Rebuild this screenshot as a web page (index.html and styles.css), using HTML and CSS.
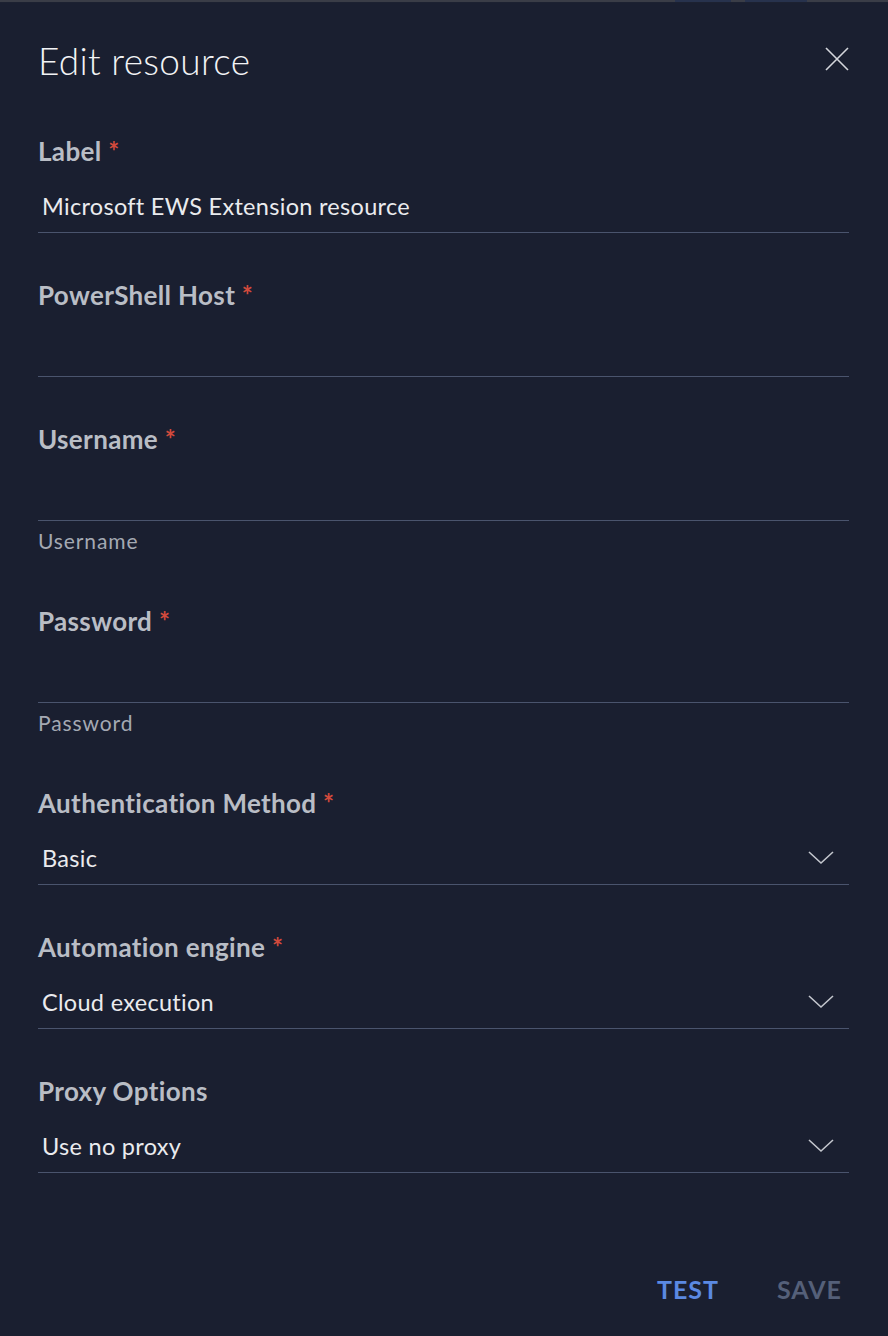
FILE: index.html
```html
<!DOCTYPE html>
<html>
<head>
<meta charset="utf-8">
<link rel="stylesheet" href="styles.css">
</head>
<body>
<div class="topline"><span class="seg seg-a"></span><span class="seg seg-b"></span></div>
<div class="panel">
  <header class="head">
    <h1 class="title">Edit resource</h1>
    <svg class="close" width="26" height="26" viewBox="0 0 26 26"><path d="M2 2 L24 24 M24 2 L2 24" stroke="#d4d6dc" stroke-width="1.6" fill="none"/></svg>
  </header>

  <div class="field">
    <div class="label">Label <span class="req">*</span></div>
    <div class="input"><span class="value">Microsoft EWS Extension resource</span></div>
  </div>

  <div class="field">
    <div class="label">PowerShell Host <span class="req">*</span></div>
    <div class="input"></div>
  </div>

  <div class="field">
    <div class="label">Username <span class="req">*</span></div>
    <div class="input"></div>
    <div class="help">Username</div>
  </div>

  <div class="field">
    <div class="label">Password <span class="req">*</span></div>
    <div class="input"></div>
    <div class="help">Password</div>
  </div>

  <div class="field">
    <div class="label">Authentication Method <span class="req">*</span></div>
    <div class="input select"><span class="value">Basic</span>
      <svg class="chev" width="26" height="14" viewBox="0 0 26 14"><path d="M1 1 L13 12 L25 1" stroke="#c4c7ce" stroke-width="1.6" fill="none"/></svg>
    </div>
  </div>

  <div class="field">
    <div class="label">Automation engine <span class="req">*</span></div>
    <div class="input select"><span class="value">Cloud execution</span>
      <svg class="chev" width="26" height="14" viewBox="0 0 26 14"><path d="M1 1 L13 12 L25 1" stroke="#c4c7ce" stroke-width="1.6" fill="none"/></svg>
    </div>
  </div>

  <div class="field">
    <div class="label">Proxy Options</div>
    <div class="input select"><span class="value">Use no proxy</span>
      <svg class="chev" width="26" height="14" viewBox="0 0 26 14"><path d="M1 1 L13 12 L25 1" stroke="#c4c7ce" stroke-width="1.6" fill="none"/></svg>
    </div>
  </div>

  <footer class="actions">
    <button class="btn test">TEST</button>
    <button class="btn save">SAVE</button>
  </footer>
</div>
</body>
</html>
```

FILE: styles.css
```css
html, body {
  margin: 0;
  padding: 0;
  background: #1a1f30;
}
body {
  width: 888px;
  height: 1336px;
  overflow: hidden;
  font-family: "Lato", "Noto Sans", sans-serif;
  color: #e6e7ea;
}
.topline {
  height: 2px;
  background: #3a3d47;
  display: flex;
  border-bottom: 1px solid #1c2131;
}
.seg { display: block; height: 2px; background: #27324d; }
.seg-a { margin-left: 675px; width: 56px; }
.seg-b { margin-left: 14px; width: 62px; }

.panel {
  padding: 0 39px 0 38px;
}
.head {
  display: flex;
  justify-content: space-between;
  align-items: center;
  height: 134px;
  margin-top: -1px;
  padding-bottom: 18px;
  box-sizing: border-box;
}
.title {
  margin: 0;
  font-weight: 300;
  font-size: 37px;
  letter-spacing: 0.3px;
  color: #f2f3f5;
}
.close { margin-right: -1px; margin-top: -2px; }

.field {
  margin-bottom: 47px;
}
.label {
  height: 30px;
  line-height: 30px;
  font-size: 26px;
  font-weight: 700;
  color: #b9bdc5;
  letter-spacing: 0.35px;
}
.req { color: #d24a3c; font-weight: 700; }
.input {
  height: 67px;
  border-bottom: 1px solid #4a546d;
  display: flex;
  align-items: flex-end;
  box-sizing: border-box;
  padding-left: 4px;
  padding-bottom: 11px;
}
.value {
  line-height: 30px;
  font-size: 23.5px;
  color: #eaebee;
  letter-spacing: 0.3px;
}
.select { justify-content: space-between; padding-right: 15px; }
.chev { margin-bottom: 8px; }
.help {
  margin-top: 9px;
  padding-bottom: 7px;
  line-height: 22px;
  font-size: 21px;
  color: #a4a9b3;
  letter-spacing: 0.9px;
}
.actions {
  display: flex;
  justify-content: flex-end;
  gap: 58px;
  margin-top: 101px;
  padding-right: 7px;
}
.btn {
  background: none;
  border: none;
  padding: 0;
  line-height: 30px;
  font-family: "Lato", "Noto Sans", sans-serif;
  font-size: 25px;
  font-weight: 700;
  letter-spacing: 1px;
}
.test { color: #5b89e2; }
.save { color: #556079; }
```
